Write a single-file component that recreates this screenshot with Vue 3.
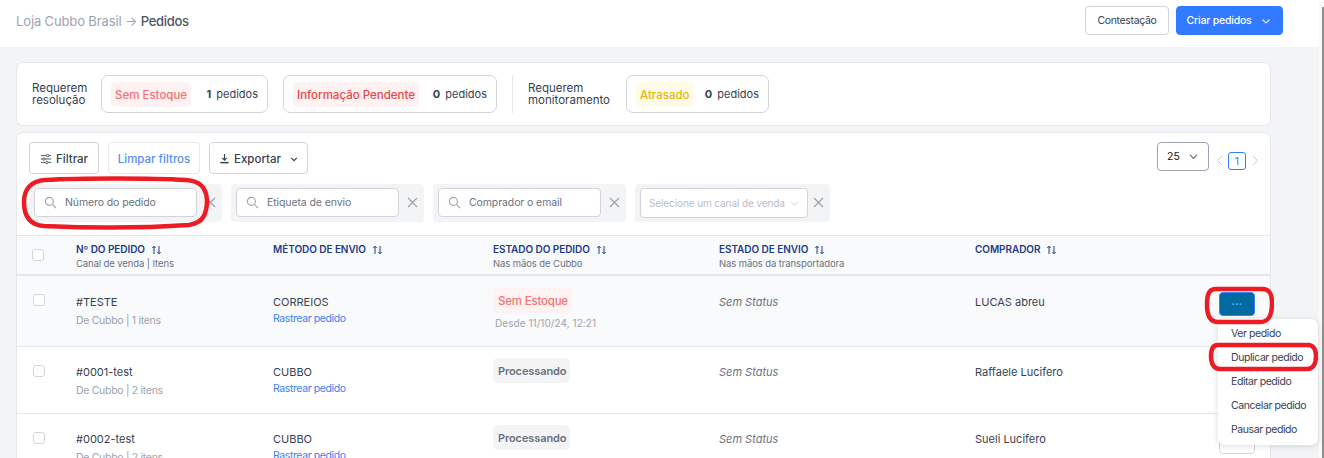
<script setup>
const rows = [
  { id: '#TESTE', sub: 'De Cubbo | 1 itens', ship: 'CORREIOS', status: 'Sem Estoque', kind: 'red', since: 'Desde 11/10/24, 12:21', buyer: 'LUCAS abreu', cls: 'first' },
  { id: '#0001-test', sub: 'De Cubbo | 2 itens', ship: 'CUBBO', status: 'Processando', kind: 'gray', since: '', buyer: 'Raffaele Lucifero', cls: 'second' },
  { id: '#0002-test', sub: 'De Cubbo | 2 itens', ship: 'CUBBO', status: 'Processando', kind: 'gray', since: '', buyer: 'Sueli Lucifero', cls: 'third' },
]
const heads = [
  { t: 'Nº DO PEDIDO', s: 'Canal de venda | Itens' },
  { t: 'MÉTODO DE ENVIO', s: '' },
  { t: 'ESTADO DO PEDIDO', s: 'Nas mãos de Cubbo' },
  { t: 'ESTADO DE ENVIO', s: 'Nas mãos da transportadora' },
  { t: 'COMPRADOR', s: '' },
]
const searches = ['Número do pedido', 'Etiqueta de envio', 'Comprador o email']
const menu = ['Ver pedido', 'Duplicar pedido', 'Editar pedido', 'Cancelar pedido', 'Pausar pedido']
</script>

<template>
  <div class="page">
    <div class="main">
      <header class="top">
        <div class="crumb"><span class="muted">Loja Cubbo Brasil → </span><span class="cur">Pedidos</span></div>
        <div class="top-actions">
          <button class="btn outline">Contestação</button>
          <button class="btn primary">Criar pedidos
            <svg width="10" height="10" viewBox="0 0 10 10" fill="none" stroke="#dbe7ff" stroke-width="1.2"><path d="M1.5 3.5 5 7l3.5-3.5"/></svg>
          </button>
        </div>
      </header>

      <section class="card attention">
        <div class="lbl one">Requerem<br>resolução</div>
        <div class="chip c1"><span class="tag red">Sem Estoque</span><span class="cnt"><b>1</b> pedidos</span></div>
        <div class="chip c2"><span class="tag redstrong">Informação Pendente</span><span class="cnt"><b>0</b> pedidos</span></div>
        <div class="vr"></div>
        <div class="lbl two">Requerem<br>monitoramento</div>
        <div class="chip c3"><span class="tag yellow">Atrasado</span><span class="cnt"><b>0</b> pedidos</span></div>
      </section>

      <section class="card orders">
        <div class="toolbar">
          <div class="tools">
            <button class="tbtn filt">
              <svg width="12" height="12" viewBox="0 0 14 14" fill="none" stroke="#4b5563" stroke-width="1.1"><path d="M1 3h12M1 7h12M1 11h12"/><circle cx="9" cy="3" r="1.4" fill="#fff"/><circle cx="4.5" cy="7" r="1.4" fill="#fff"/><circle cx="8" cy="11" r="1.4" fill="#fff"/></svg>
              Filtrar</button>
            <button class="tbtn clear">Limpar filtros</button>
            <button class="tbtn exp">
              <svg width="11" height="11" viewBox="0 0 12 12" fill="none" stroke="#374151" stroke-width="1.2"><path d="M6 1v6.5M3.5 5.2 6 7.8l2.5-2.6"/><path d="M1.5 10.5h9" stroke-width="1.6"/></svg>
              Exportar
              <svg class="exp-chev" width="8" height="8" viewBox="0 0 10 10" fill="none" stroke="#374151" stroke-width="1.5"><path d="M1.5 3.5 5 7l3.5-3.5"/></svg>
            </button>
          </div>
          <div class="pager">
            <div class="size"><span>25</span>
              <svg width="9" height="9" viewBox="0 0 10 10" fill="none" stroke="#6b7280" stroke-width="1.3"><path d="M1 3 5 7l4-4"/></svg>
            </div>
            <svg class="pv" width="7" height="11" viewBox="0 0 7 11" fill="none" stroke="#c5c9d0" stroke-width="1"><path d="M6 1 1.5 5.5 6 10"/></svg>
            <span class="pg">1</span>
            <svg class="nx" width="7" height="11" viewBox="0 0 7 11" fill="none" stroke="#c5c9d0" stroke-width="1"><path d="m1 1 4.5 4.5L1 10"/></svg>
          </div>
        </div>

        <div class="filters">
          <div class="fgroup" v-for="s in searches" :key="s">
            <div class="finput">
              <svg width="13" height="13" viewBox="0 0 14 14" fill="none" stroke="#9ca3af" stroke-width="1.2"><circle cx="5.8" cy="5.8" r="4.3"/><path d="m9 9 4 4"/></svg>
              <span>{{ s }}</span>
            </div>
            <svg class="fx" width="11" height="11" viewBox="0 0 11 11" stroke="#9ca3af" stroke-width="1.2"><path d="m1 1 9 9M10 1l-9 9"/></svg>
          </div>
          <div class="fgroup sel">
            <div class="finput select">
              <span>Selecione um canal de venda</span>
              <svg width="9" height="9" viewBox="0 0 10 10" fill="none" stroke="#c7cbd1" stroke-width="1"><path d="M1 3 5 7l4-4"/></svg>
            </div>
            <svg class="fx" width="11" height="11" viewBox="0 0 11 11" stroke="#9ca3af" stroke-width="1.2"><path d="m1 1 9 9M10 1l-9 9"/></svg>
          </div>
        </div>

        <div class="grid head">
          <div class="cell"><span class="check"></span></div>
          <div class="cell" v-for="h in heads" :key="h.t">
            <div class="ht">{{ h.t }}
              <svg width="11" height="10" viewBox="0 0 11 10" fill="none" stroke="#1e3a8a" stroke-width="1"><path d="M3 9V1.5M1.3 3 3 1.2 4.7 3"/><path d="M8 1v7.5M6.3 7 8 8.8 9.7 7"/></svg>
            </div>
            <div class="hs" v-if="h.s">{{ h.s }}</div>
          </div>
        </div>

        <div class="grid row" :class="r.cls" v-for="r in rows" :key="r.id">
          <div class="cell"><span class="check"></span></div>
          <div class="cell"><div class="main-t">{{ r.id }}</div><div class="sub">{{ r.sub }}</div></div>
          <div class="cell"><div class="main-t">{{ r.ship }}</div><a class="track">Rastrear pedido</a></div>
          <div class="cell"><span class="status" :class="r.kind">{{ r.status }}</span><div class="since" v-if="r.since">{{ r.since }}</div></div>
          <div class="cell"><div class="main-t it">Sem Status</div></div>
          <div class="cell"><div class="main-t">{{ r.buyer }}</div></div>
          <div class="cell act">
            <button class="dots on" v-if="r.cls === 'first'">···</button>
            <button class="dots" v-else-if="r.cls === 'third'"></button>
          </div>
        </div>

        <div class="menu">
          <div class="mi" v-for="m in menu" :key="m">{{ m }}</div>
        </div>

        <svg class="ann a1" width="190" height="55" viewBox="0 0 190 55" fill="none" stroke="#ed1c24" stroke-width="4.5"><path d="M24 4C60 2 130 2 165 4c14 1 20 7 21 20 0 14-4 23-18 25-45 3-100 3-145 1C9 49 3 40 3 26 3 13 10 5 24 4Z"/></svg>
        <svg class="ann a2" width="70" height="40" viewBox="0 0 70 40" fill="none" stroke="#ed1c24" stroke-width="4.5"><path d="M12 3h46c7 0 10 4 10 14 0 12-3 19-12 19H14C6 36 3 30 3 19 3 8 5 3 12 3Z"/></svg>
        <svg class="ann a3" width="110" height="30" viewBox="0 0 110 30" fill="none" stroke="#ed1c24" stroke-width="4.5"><path d="M10 3h90c5 0 8 4 8 11 0 8-3 13-9 13H12C6 27 3 22 3 14 3 7 5 3 10 3Z"/></svg>
      </section>
    </div>
    <div class="scroll"></div>
  </div>
</template>

<style>
html, body { margin: 0; height: 458px; overflow: hidden; background: #f3f4f6; }
</style>

<style scoped>
* { box-sizing: border-box; }
.page { display: flex; width: 1324px; height: 458px; overflow: hidden; font-family: Inter, "Noto Sans", sans-serif; font-size: 11px; color: #374151; background: #f3f4f6; }
.main { width: 1319px; flex: none; }
.scroll { flex: 1; background: #fafafa; position: relative; }
.scroll::after { content: ""; position: absolute; left: 3px; right: 0; top: 7px; bottom: 0; background: #8f8f8f; }
.top { height: 47px; background: #fff; display: flex; justify-content: space-between; padding: 6px 36px 0 16px; }
.crumb { font-size: 13px; line-height: 31px; }
.muted { color: #9ca3af; letter-spacing: -.13px; }
.cur { color: #4b5563; font-weight: 500; letter-spacing: -.3px; }
.top-actions { display: flex; gap: 7px; height: 29px; }
.btn { font-family: inherit; font-size: 10.5px; border-radius: 4px; border: 1px solid #d1d5db; }
.outline { width: 84px; background: #fff; color: #374151; letter-spacing: -.35px; }
.primary { width: 107px; background: #327aff; border-color: #327aff; color: #fff; display: flex; align-items: center; justify-content: center; gap: 9px; letter-spacing: -.2px; padding-left: 4px; font-weight: 500; }

.card { background: #fff; border: 1px solid #e5e7eb; border-radius: 7px; width: 1255px; margin-left: 16px; }
.attention { margin-top: 15px; height: 64px; display: flex; align-items: center; padding-left: 15px; }
.lbl { font-size: 11.5px; line-height: 12.5px; color: #374151; }
.lbl.one { width: 69px; }
.lbl.two { width: 98px; }
.chip { height: 38px; display: flex; align-items: center; justify-content: space-between; border: 1px solid #d1d5db; border-radius: 7px; padding: 0 9px; }
.c1 { width: 167px; }
.c2 { width: 214px; margin-left: 15px; }
.c3 { width: 143px; }
.tag { height: 25px; line-height: 27px; padding: 0 4px; border-radius: 5px; font-size: 11.5px; font-weight: 500; }
.red { background: #fef2f2; color: #f87171; }
.redstrong { background: #fef2f2; color: #ef4444; }
.yellow { background: #fefce8; color: #eab308; }
.cnt { font-size: 11px; color: #374151; }
.cnt b { font-weight: 700; margin-right: 2px; }
.vr { width: 1px; height: 38px; background: #e5e7eb; margin: 0 15px; }

.orders { margin-top: 6px; height: 400px; position: relative; }
.toolbar { display: flex; justify-content: space-between; padding: 9px 0 0 12px; height: 50px; }
.tools { display: flex; gap: 9px; height: 32px; }
.tbtn { font-family: inherit; font-size: 11.5px; font-weight: 500; border: 1px solid #d1d5db; border-radius: 4px; background: #fff; color: #374151; display: flex; align-items: center; justify-content: center; gap: 4px; padding: 1px 0 0; }
.filt { width: 70px; }
.clear { width: 92px; color: #5b8cf8; border-color: #e5e7eb; }
.exp { width: 99px; }
.exp-chev { margin-left: 5px; }
.pager { display: flex; align-items: flex-start; height: 29px; margin: 0 11px 0 0; }
.size { width: 52px; height: 29px; border: 1px solid #9ca3af; border-radius: 4px; display: flex; align-items: center; justify-content: space-between; padding: 0 10px 0 9px; color: #111827; font-size: 10.5px; }
.pv { margin: 13px 5px 0 7px; flex: none; }
.nx { margin: 13px 0 0 6px; flex: none; }
.pg { width: 18px; height: 18px; margin-top: 10px; border: 1px solid #327aff; border-radius: 3px; color: #327aff; text-align: center; line-height: 17px; font-size: 10.5px; }

.filters { display: flex; gap: 9px; padding-left: 12px; height: 39px; margin-top: 1px; }
.fgroup { width: 193px; height: 38px; background: #f3f4f6; border-radius: 4px; display: flex; align-items: flex-start; padding: 4px 0 0 5px; }
.fgroup.sel { width: 195px; }
.finput { width: 163px; height: 29px; background: #fff; border: 1px solid #d1d5db; border-radius: 4px; display: flex; align-items: center; padding: 0 0 1px 9px; gap: 8px; color: #6b7280; font-size: 10.5px; letter-spacing: -.1px; flex: none; white-space: nowrap; }
.select { width: 168px; height: 30px; justify-content: space-between; padding: 0 8px 0 8px; color: #b9bec7; gap: 0; letter-spacing: -.1px; font-size: 10px; }
.fx { margin: 9px 0 0 8px; flex: none; }
.sel .fx { margin-left: 5px; }

.grid { display: grid; grid-template-columns: 59px 197px 220px 226px 256px 1fr 0; }
.head { margin-top: 12px; height: 41px; background: #f9fafb; border-top: 1px solid #e5e7eb; border-bottom: 2px solid #e5e7eb; }
.head .cell:first-child { padding: 13px 0 0 15px; }
.head .cell { padding-top: 6px; }
.ht { font-size: 10px; line-height: 15px; font-weight: 600; color: #1e3a8a; display: flex; align-items: center; gap: 6px; letter-spacing: -.06px; }
.hs { font-size: 9.5px; line-height: 14px; color: #6b7280; letter-spacing: -.1px; }
.check { display: block; width: 12px; height: 12px; background: #fff; border: 1px solid #d1d5db; border-radius: 3px; }
.row { border-bottom: 1px solid #e5e7eb; position: relative; }
.row .cell:first-child { padding: 18px 0 0 16px; }
.row .cell { padding-top: 16px; }
.first .cell { padding-top: 17px; }
.first { height: 71px; background: #f9fafb; }
.second { height: 67px; }
.third { height: 67px; }
.main-t { font-size: 11px; line-height: 18px; color: #374151; }
.it { font-style: italic; color: #6b7280; }
.sub { font-size: 10.5px; line-height: 18px; color: #9ca3af; margin-top: 1px; letter-spacing: -.3px; }
.track { display: block; font-size: 10.5px; line-height: 15px; color: #3b82f6; margin-top: 0; letter-spacing: -.4px; }
.row .cell:nth-child(4) { padding-top: 11px; }
.first .cell:nth-child(4) { padding-top: 12px; }
.status { display: inline-block; height: 25px; line-height: 27px; padding: 0 4px 0 5px; border-radius: 5px; font-weight: 600; }
.status.red { background: #fef2f2; color: #f87171; font-size: 11.5px; letter-spacing: -.2px; font-weight: 500; }
.status.gray { background: #f3f4f6; color: #6b7280; font-size: 11px; letter-spacing: -.1px; }
.since { font-size: 10px; line-height: 14px; color: #9ca3af; margin: 3px 0 0 2px; letter-spacing: .06px; }
.row .act { position: relative; padding: 0; }
.dots { position: absolute; right: 15px; top: 16px; width: 36px; height: 24px; background: #fff; border: 1px solid #d1d5db; border-radius: 4px; padding: 0; color: #60a5fa; font-size: 11px; line-height: 1; font-weight: 700; }
.dots.on { background: #0369a1; border-color: #3b82f6; }

.menu { position: absolute; left: 1201px; top: 186px; width: 100px; height: 126px; background: #fff; border-radius: 7px; box-shadow: 0 1px 6px rgba(0,0,0,.14); padding-top: 3px; z-index: 3; }
.mi { height: 24px; line-height: 24px; padding-left: 13px; font-size: 10.5px; color: #374151; letter-spacing: -.42px; }
.ann { position: absolute; z-index: 4; pointer-events: none; }
.a1 { left: 4px; top: 43px; }
.a2 { left: 1187px; top: 153px; }
.a3 { left: 1191px; top: 209px; }
</style>
